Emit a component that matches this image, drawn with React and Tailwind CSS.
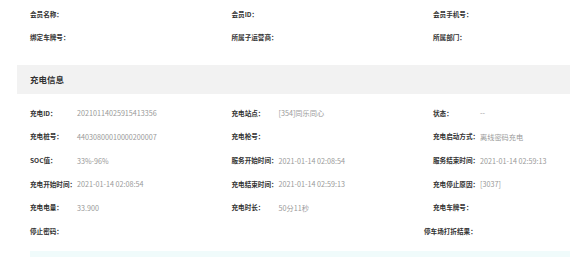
const memberRows = [
  [{ label: "会员名称：" }, { label: "会员ID：" }, { label: "会员手机号：" }],
  [{ label: "绑定车牌号：" }, { label: "所属子运营商：" }, { label: "所属部门：" }],
];

const chargeRows = [
  [
    { label: "充电ID：", value: "20210114025915413356" },
    { label: "充电站点：", value: "[354]同乐同心" },
    { label: "状态：", value: "--" },
  ],
  [
    { label: "充电桩号：", value: "44030800010000200007" },
    { label: "充电枪号：" },
    { label: "充电启动方式：", value: "离线密码充电" },
  ],
  [
    { label: "SOC值：", value: "33%-96%" },
    { label: "服务开始时间：", value: "2021-01-14 02:08:54" },
    { label: "服务结束时间：", value: "2021-01-14 02:59:13" },
  ],
  [
    { label: "充电开始时间：", value: "2021-01-14 02:08:54" },
    { label: "充电结束时间：", value: "2021-01-14 02:59:13" },
    { label: "充电停止原因：", value: "[3037]" },
  ],
  [
    { label: "充电电量：", value: "33.900" },
    { label: "充电时长：", value: "50分11秒" },
    { label: "充电车牌号：" },
  ],
];

function Field({ label, value, shift }) {
  return (
    <div className={`flex h-[23.6px] w-[201.5px] shrink-0 items-center ${shift ? "ml-[-9px]" : ""}`}>
      <span className="min-w-[47px] whitespace-nowrap text-[6.6px] font-bold text-[#333]">
        {label}
      </span>
      {value && (
        <span className="whitespace-nowrap text-[7.2px] text-[#999]">{value}</span>
      )}
    </div>
  );
}

export default function App() {
  return (
    <div
      className="h-[257px] w-[570px] overflow-hidden bg-white"
      style={{ fontFamily: '"Noto Sans CJK SC", "Noto Sans", sans-serif' }}
    >
      <div className="pl-[30px] pt-[3px]">
        {memberRows.map((row, i) => (
          <div key={i} className="flex h-[23px]">
            {row.map((f) => (
              <div key={f.label} className="flex h-[23px] w-[201.5px] shrink-0 items-center">
                <span className="whitespace-nowrap text-[6.6px] font-bold text-[#333]">
                  {f.label}
                </span>
              </div>
            ))}
          </div>
        ))}
      </div>

      <div className="ml-[17px] mt-[16px] flex h-[29px] items-center bg-[#f2f2f2] pl-[13px]">
        <span className="text-[8.5px] font-bold text-[#333]">充电信息</span>
      </div>

      <div className="pl-[30px] pt-[8px]">
        {chargeRows.map((row, i) => (
          <div key={i} className="flex">
            {row.map((f) => (
              <Field key={f.label} label={f.label} value={f.value} />
            ))}
          </div>
        ))}
        <div className="flex">
          <Field label="停止密码：" />
          <div className="w-[201.5px] shrink-0" />
          <Field label="停车场打折结果：" shift />
        </div>
      </div>

      <div className="ml-[30px] mt-[7px] h-[20px] bg-[#f0fbfb]" />
    </div>
  );
}
